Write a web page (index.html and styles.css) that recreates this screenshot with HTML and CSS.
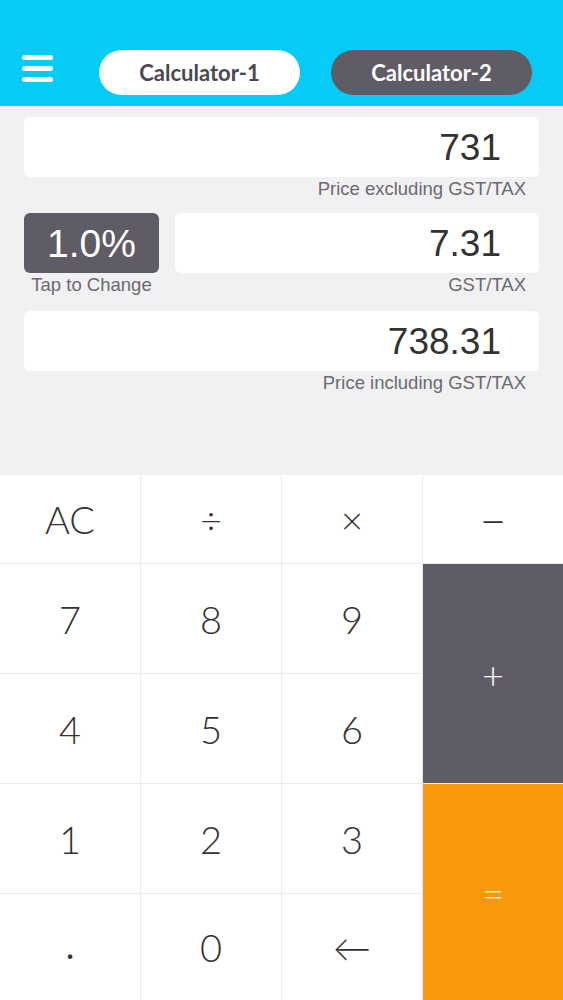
FILE: index.html
```html
<!DOCTYPE html>
<html lang="en">
<head>
    <meta charset="UTF-8">
    <meta name="viewport" content="width=device-width, initial-scale=1.0">
    <title>GST Calculator</title>
    <link rel="stylesheet" href="styles.css">
</head>
<body>
    <header class="top-bar">
        <div class="menu-icon">
            <span></span>
            <span></span>
            <span></span>
        </div>
        <button class="tab tab-active">Calculator-1</button>
        <button class="tab">Calculator-2</button>
    </header>

    <main class="display">
        <div class="field">
            <div class="value-box">731</div>
        </div>
        <div class="caption">Price excluding GST/TAX</div>

        <div class="rate-row">
            <div class="rate-col">
                <div class="rate-box">1.0%</div>
                <div class="caption caption-center">Tap to Change</div>
            </div>
            <div class="rate-field">
                <div class="value-box">7.31</div>
                <div class="caption">GST/TAX</div>
            </div>
        </div>

        <div class="field">
            <div class="value-box">738.31</div>
        </div>
        <div class="caption">Price including GST/TAX</div>
    </main>

    <section class="keypad">
        <div class="key">AC</div>
        <div class="key">&divide;</div>
        <div class="key">&times;</div>
        <div class="key key-minus">&minus;</div>
        <div class="key">7</div>
        <div class="key">8</div>
        <div class="key">9</div>
        <div class="key key-plus">+</div>
        <div class="key">4</div>
        <div class="key">5</div>
        <div class="key">6</div>
        <div class="key">1</div>
        <div class="key">2</div>
        <div class="key">3</div>
        <div class="key key-equal">=</div>
        <div class="key key-dot">.</div>
        <div class="key">0</div>
        <div class="key">&larr;</div>
    </section>
</body>
</html>
```

FILE: styles.css
```css
/* Reset */
* {
    margin: 0;
    padding: 0;
    box-sizing: border-box;
}

body {
    font-family: "Liberation Sans", Arial, sans-serif;
    background-color: #f1f0f3;
    width: 563px;
    height: 1000px;
    overflow: hidden;
    display: flex;
    flex-direction: column;
}

/* Header */
.top-bar {
    background-color: #06cbf7;
    height: 106px;
    display: flex;
    align-items: center;
    padding: 38px 31px 0 22px;
}

.menu-icon {
    width: 31px;
    display: flex;
    flex-direction: column;
    gap: 6px;
    margin-right: 46px;
    margin-bottom: 8px;
}

.menu-icon span {
    display: block;
    height: 5px;
    background-color: #fff;
    border-radius: 3px;
}

.tab {
    width: 201px;
    height: 45px;
    border: none;
    border-radius: 23px;
    background-color: #5f5c66;
    color: #fff;
    font-family: Lato, "Liberation Sans", sans-serif;
    font-weight: 700;
    font-size: 22px;
}

.tab-active {
    background-color: #fff;
    color: #4a494f;
    margin-right: 31px;
}

/* Display area */
.display {
    height: 369px;
    padding: 11px 24px 0;
}

.value-box {
    background-color: #fff;
    height: 60px;
    border-radius: 6px;
    text-align: right;
    padding-right: 38px;
    font-size: 37px;
    line-height: 62px;
    color: #333;
}

.caption {
    text-align: right;
    padding-right: 13px;
    font-size: 18.5px;
    line-height: 24px;
    color: #6b6a6e;
    margin-bottom: 12px;
}

.caption-center {
    text-align: center;
    padding-right: 0;
    white-space: nowrap;
}

.rate-row {
    display: flex;
    gap: 16px;
    margin-bottom: 2px;
}

.rate-col {
    width: 135px;
}

.rate-box {
    background-color: #5f5c66;
    height: 60px;
    border-radius: 6px;
    color: #fff;
    text-align: center;
    font-size: 39px;
    line-height: 62px;
}

.rate-field {
    flex: 1;
}

/* Keypad */
.keypad {
    flex: 1;
    display: grid;
    grid-template-columns: repeat(4, 1fr);
    grid-template-rows: 88px 109px 109px 109px 1fr;
    gap: 1px;
    background-color: #ececee;
}

.key {
    background-color: #fff;
    display: flex;
    align-items: center;
    justify-content: center;
    font-family: Lato, "Liberation Sans", sans-serif;
    font-weight: 300;
    font-size: 38px;
    color: #333;
}

.key-minus {
    font-size: 46px;
}

.key-plus {
    grid-column: 4;
    grid-row: 2 / 4;
    background-color: #5f5c66;
    color: #fff;
}

.key-equal {
    grid-column: 4;
    grid-row: 4 / 6;
    background-color: #f8980b;
    color: #fff;
}

.key-dot {
    font-weight: 700;
    font-size: 30px;
}
```
